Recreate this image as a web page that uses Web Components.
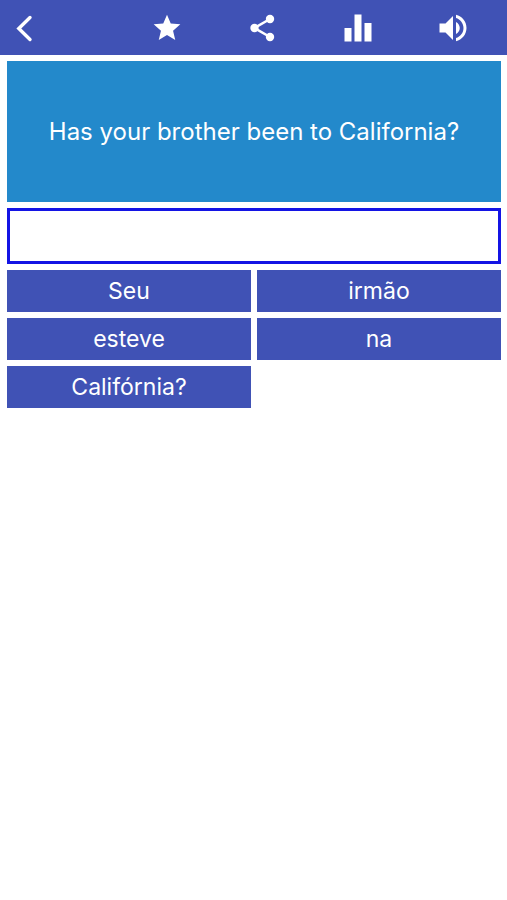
<!DOCTYPE html>
<html lang="en">
<head>
<meta charset="utf-8">
<meta name="viewport" content="width=device-width, initial-scale=1">
<title>Build the sentence</title>
<style>
body {
    margin: 0;
    background: #fff;
    font-family: Inter, "Liberation Sans", sans-serif;
    --bar: #4052b5;
    --card: #2389cb;
}
</style>
</head>
<body>

<sentence-quiz></sentence-quiz>

<script>
// TOP BAR - one back button and the action buttons passed in the slot
const templateBar = document.createElement("template");
templateBar.innerHTML = `
<style>
:host {
    display: block;
    background: var(--bar);
}
nav {
    display: grid;
    grid-template-columns: 5fr 4fr 4fr 4fr 4fr;
    height: 55px;
    padding-right: 6px;
}
</style>
<nav><slot></slot></nav>
`;

class QuizBar extends HTMLElement {
    constructor() {
        super();
        this.attachShadow({mode: "open"});
    }

    connectedCallback() {
        this.shadowRoot.appendChild(templateBar.content.cloneNode(true));
    }
}
customElements.define("quiz-bar", QuizBar);

// ICON BUTTON
const icons = {
    back: `<svg width="32" height="32" viewBox="0 0 32 32"><path d="M22 5.500 10.800 16.500 22 27.500" fill="none" stroke="#fff" stroke-width="3.400" stroke-linecap="round"/></svg>`,
    star: `<svg width="32" height="32" viewBox="0 0 24 24"><path d="M12 17.270 18.180 21l-1.640-7.030L22 9.240l-7.190-.61L12 2 9.190 8.630 2 9.240l5.460 4.730L5.820 21z"/></svg>`,
    share: `<svg width="32" height="32" viewBox="0 0 32 32"><path d="M24 7 8.500 16 24 25" fill="none" stroke="#fff" stroke-width="2.600"/><circle cx="24" cy="7" r="4.200"/><circle cx="8.500" cy="16" r="4.200"/><circle cx="24" cy="25" r="4.200"/></svg>`,
    stats: `<svg width="32" height="32" viewBox="0 0 32 32"><path d="M2.500 16h7v13.500h-7zM12.500 2.500h7v27h-7zM22.500 11h7v18.500h-7z"/></svg>`,
    sound: `<svg width="36" height="36" viewBox="0 0 24 24"><path d="M3 9v6h4l5 5V4L7 9H3zm13.500 3c0-1.770-1.020-3.290-2.500-4.030v8.050c1.480-.73 2.500-2.250 2.500-4.020zM14 3.230v2.060c2.890.86 5 3.540 5 6.710s-2.110 5.850-5 6.710v2.060c4.010-.91 7-4.490 7-8.770s-2.990-7.860-7-8.770z"/></svg>`
};

const templateIcon = document.createElement("template");
templateIcon.innerHTML = `
<style>
:host {
    display: flex;
    min-width: 0;
}
button {
    display: flex;
    align-items: center;
    justify-content: center;
    width: 100%;
    padding: 0;
    border: 0;
    background: none;
    cursor: pointer;
}
:host([name="back"]) button {
    justify-content: flex-start;
    padding-left: 8px;
}
svg {
    display: block;
    fill: #fff;
}
</style>
<button type="button"></button>
`;

class IconButton extends HTMLElement {
    constructor() {
        super();
        this.attachShadow({mode: "open"});
    }

    connectedCallback() {
        this.shadowRoot.appendChild(templateIcon.content.cloneNode(true));
        const button = this.shadowRoot.querySelector("button");
        button.innerHTML = icons[this.getAttribute("name")];
        button.setAttribute("aria-label", this.getAttribute("label"));
    }
}
customElements.define("icon-button", IconButton);

// QUESTION CARD
const templateQuestion = document.createElement("template");
templateQuestion.innerHTML = `
<style>
:host {
    display: flex;
    align-items: center;
    justify-content: center;
    min-height: 141px;
    background: var(--card);
}
p {
    margin: 0;
    color: #fff;
    font-size: 24px;
    line-height: 32px;
    text-align: center;
}
</style>
<p><slot></slot></p>
`;

class QuestionCard extends HTMLElement {
    constructor() {
        super();
        this.attachShadow({mode: "open"});
    }

    connectedCallback() {
        this.shadowRoot.appendChild(templateQuestion.content.cloneNode(true));
    }
}
customElements.define("question-card", QuestionCard);

// ANSWER BOX
const templateAnswer = document.createElement("template");
templateAnswer.innerHTML = `
<style>
:host {
    display: block;
}
input {
    display: block;
    box-sizing: border-box;
    width: 100%;
    height: 56px;
    padding: 0 12px;
    border: 3px solid #1414e4;
    border-radius: 0;
    background: #fff;
    font: inherit;
    font-size: 23px;
    outline: none;
}
</style>
<input type="text" aria-label="Your answer" readonly>
`;

class AnswerBox extends HTMLElement {
    constructor() {
        super();
        this.attachShadow({mode: "open"});
    }

    connectedCallback() {
        this.shadowRoot.appendChild(templateAnswer.content.cloneNode(true));
    }

    addWord(word) {
        const input = this.shadowRoot.querySelector("input");
        input.value = (input.value + " " + word).trim();
    }
}
customElements.define("answer-box", AnswerBox);

// WORD BUTTON
const templateWord = document.createElement("template");
templateWord.innerHTML = `
<style>
:host {
    display: block;
}
button {
    display: block;
    width: 100%;
    height: 42px;
    padding: 0;
    border: 0;
    background: var(--bar);
    color: #fff;
    font: inherit;
    font-size: 23px;
    line-height: 42px;
    cursor: pointer;
}
</style>
<button type="button"><slot></slot></button>
`;

class WordButton extends HTMLElement {
    constructor() {
        super();
        this.attachShadow({mode: "open"});
    }

    connectedCallback() {
        this.shadowRoot.appendChild(templateWord.content.cloneNode(true));
    }
}
customElements.define("word-button", WordButton);

// WHOLE SCREEN
const templateQuiz = document.createElement("template");
templateQuiz.innerHTML = `
<style>
:host {
    display: block;
}
main {
    display: grid;
    gap: 6px;
    padding: 6px 6px 6px 7px;
}
.words {
    display: grid;
    grid-template-columns: 1fr 1fr;
    gap: 6px;
}
</style>
<quiz-bar>
    <icon-button name="back" label="Back"></icon-button>
    <icon-button name="star" label="Favourite"></icon-button>
    <icon-button name="share" label="Share"></icon-button>
    <icon-button name="stats" label="Statistics"></icon-button>
    <icon-button name="sound" label="Listen"></icon-button>
</quiz-bar>
<main>
    <question-card>Has your brother been to California?</question-card>
    <answer-box></answer-box>
    <div class="words">
        <word-button>Seu</word-button>
        <word-button>irmão</word-button>
        <word-button>esteve</word-button>
        <word-button>na</word-button>
        <word-button>Califórnia?</word-button>
    </div>
</main>
`;

class SentenceQuiz extends HTMLElement {
    constructor() {
        super();
        this.attachShadow({mode: "open"});
    }

    connectedCallback() {
        this.shadowRoot.appendChild(templateQuiz.content.cloneNode(true));
        const answer = this.shadowRoot.querySelector("answer-box");

        // tapping a word moves it into the answer
        this.shadowRoot.querySelectorAll("word-button").forEach(word => {
            word.addEventListener("click", () => answer.addWord(word.textContent));
        });
    }
}
customElements.define("sentence-quiz", SentenceQuiz);
</script>
</body>
</html>
